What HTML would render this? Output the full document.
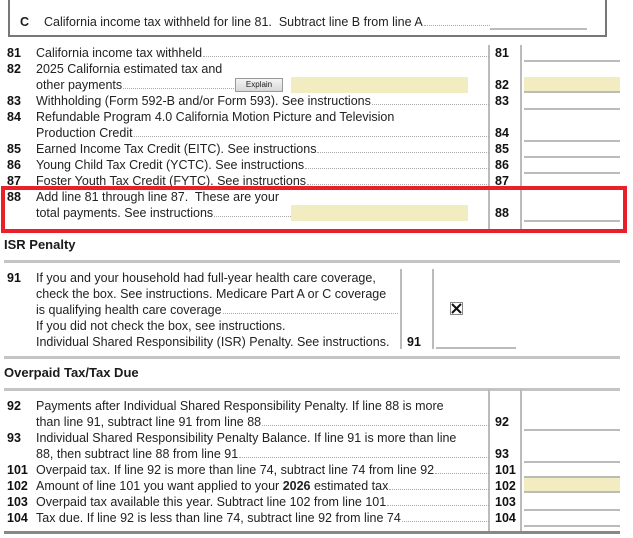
<!DOCTYPE html>
<html><head><meta charset="utf-8"><style>
*{margin:0;padding:0;box-sizing:border-box}
body{width:633px;height:538px;background:#fff;position:relative;overflow:hidden;font-family:"Liberation Sans",Arial,sans-serif;font-size:12.5px;color:#1a1a1a}
.a{position:absolute}
.n{position:absolute;left:7px;height:16px;line-height:16px;font-weight:bold;color:#111}
.t{position:absolute;left:36px;height:16px;line-height:16px;display:flex;white-space:nowrap;color:#222}
.t .d{flex:1;border-bottom:1px dotted #aaa;margin:0 0 4px 1px}
.rn{position:absolute;left:495px;height:16px;line-height:16px;font-weight:bold;color:#111}
.f{position:absolute;left:524px;width:96px;height:2px;background:#bbb}
.y{position:absolute;background:#f3ecc0}
.h{position:absolute;left:4px;font-weight:bold;font-size:13px}
.rule{position:absolute;left:4px;width:616px;height:3px;background:#c4c4c4}
.v{position:absolute;width:2px;background:#bbb}
</style></head><body>
<div class="a" style="left:8px;top:-2px;width:599px;height:39px;border:2px solid #777;border-top:none"></div>
<div class="a" style="left:20px;top:14px;line-height:16px;font-weight:bold">C</div>
<div class="t" style="left:44px;top:14px;width:446px">California income tax withheld for line 81.&nbsp; Subtract line B from line A<span class="d"></span></div>
<div class="a" style="left:490px;top:28px;width:97px;height:2px;background:#bbb"></div>

<div class="v" style="left:488px;top:45px;height:185px"></div>
<div class="v" style="left:520px;top:45px;height:185px"></div>

<div class="n" style="top:45px">81</div><div class="t" style="top:45px;width:453px">California income tax withheld<span class="d"></span></div><div class="rn" style="top:45px">81</div><div class="f" style="top:60px"></div>
<div class="n" style="top:61px">82</div><div class="t" style="top:61px">2025 California estimated tax and</div>
<div class="t" style="top:77px;width:198px">other payments<span class="d"></span></div>
<div class="a" style="left:235px;top:78px;width:48px;height:14px;border:1px solid #999;background:linear-gradient(#f4f4f4,#d8d8d8);font-size:8px;line-height:12px;text-align:center">Explain</div>
<div class="y" style="left:291px;top:77px;width:177px;height:16px"></div>
<div class="rn" style="top:77px">82</div><div class="y" style="left:524px;top:77px;width:96px;height:16px;border-bottom:2px solid #bbb"></div>
<div class="n" style="top:93px">83</div><div class="t" style="top:93px;width:453px">Withholding (Form 592-B and/or Form 593). See instructions<span class="d"></span></div><div class="rn" style="top:93px">83</div><div class="f" style="top:108px"></div>
<div class="n" style="top:109px">84</div><div class="t" style="top:109px">Refundable Program 4.0 California Motion Picture and Television</div>
<div class="t" style="top:125px;width:453px">Production Credit<span class="d"></span></div><div class="rn" style="top:125px">84</div><div class="f" style="top:140px"></div>
<div class="n" style="top:141px">85</div><div class="t" style="top:141px;width:453px">Earned Income Tax Credit (EITC). See instructions<span class="d"></span></div><div class="rn" style="top:141px">85</div><div class="f" style="top:156px"></div>
<div class="n" style="top:157px">86</div><div class="t" style="top:157px;width:453px">Young Child Tax Credit (YCTC). See instructions<span class="d"></span></div><div class="rn" style="top:157px">86</div><div class="f" style="top:172px"></div>
<div class="n" style="top:173px">87</div><div class="t" style="top:173px;width:453px">Foster Youth Tax Credit (FYTC). See instructions<span class="d"></span></div><div class="rn" style="top:173px">87</div>
<div class="n" style="top:189px">88</div><div class="t" style="top:189px">Add line 81 through line 87.&nbsp; These are your</div>
<div class="t" style="top:205px;width:255px">total payments. See instructions<span class="d"></span></div>
<div class="y" style="left:291px;top:205px;width:177px;height:16px"></div>
<div class="rn" style="top:205px">88</div><div class="f" style="top:220px"></div>
<div class="a" style="left:1px;top:186px;width:626px;height:47px;border:4px solid #e8202a"></div>

<div class="h" style="top:237px;line-height:16px">ISR Penalty</div>
<div class="rule" style="top:260px"></div>
<div class="v" style="left:400px;top:269px;height:80px"></div>
<div class="v" style="left:432px;top:269px;height:80px"></div>
<div class="n" style="top:270px">91</div><div class="t" style="top:270px">If you and your household had full-year health care coverage,</div>
<div class="t" style="top:286px">check the box. See instructions. Medicare Part A or C coverage</div>
<div class="t" style="top:302px;width:362px">is qualifying health care coverage<span class="d"></span></div>
<div class="t" style="top:318px">If you did not check the box, see instructions.</div>
<div class="t" style="top:334px">Individual Shared Responsibility (ISR) Penalty. See instructions.</div>
<div class="rn" style="left:407px;top:334px">91</div>
<div class="a" style="left:450px;top:302px;width:13px;height:13px;border:1px solid #888"><svg width="11" height="11" style="display:block"><path d="M1 1L10 10M10 1L1 10" stroke="#111" stroke-width="2"/></svg></div>
<div class="a" style="left:436px;top:347px;width:80px;height:2px;background:#bbb"></div>
<div class="rule" style="top:356px"></div>

<div class="h" style="top:365px;line-height:16px">Overpaid Tax/Tax Due</div>
<div class="rule" style="top:388px"></div>
<div class="v" style="left:488px;top:389px;height:144px"></div>
<div class="v" style="left:520px;top:389px;height:144px"></div>
<div class="n" style="top:398px">92</div><div class="t" style="top:398px">Payments after Individual Shared Responsibility Penalty. If line 88 is more</div>
<div class="t" style="top:414px;width:453px">than line 91, subtract line 91 from line 88<span class="d"></span></div><div class="rn" style="top:414px">92</div><div class="f" style="top:429px"></div>
<div class="n" style="top:430px">93</div><div class="t" style="top:430px">Individual Shared Responsibility Penalty Balance. If line 91 is more than line</div>
<div class="t" style="top:446px;width:453px">88, then subtract line 88 from line 91<span class="d"></span></div><div class="rn" style="top:446px">93</div><div class="f" style="top:461px"></div>
<div class="n" style="top:462px">101</div><div class="t" style="top:462px;width:453px">Overpaid tax. If line 92 is more than line 74, subtract line 74 from line 92<span class="d"></span></div><div class="rn" style="top:462px">101</div>
<div class="y" style="left:524px;top:476px;width:96px;height:17px;border-top:2px solid #bbb;border-bottom:2px solid #bbb"></div>
<div class="n" style="top:478px">102</div><div class="t" style="top:478px;width:453px">Amount of line 101 you want applied to your&nbsp;<b>2026</b>&nbsp;estimated tax<span class="d"></span></div><div class="rn" style="top:478px">102</div>
<div class="n" style="top:494px">103</div><div class="t" style="top:494px;width:453px">Overpaid tax available this year. Subtract line 102 from line 101<span class="d"></span></div><div class="rn" style="top:494px">103</div><div class="f" style="top:509px"></div>
<div class="n" style="top:510px">104</div><div class="t" style="top:510px;width:453px">Tax due. If line 92 is less than line 74, subtract line 92 from line 74<span class="d"></span></div><div class="rn" style="top:510px">104</div><div class="f" style="top:525px"></div>
<div class="a" style="left:4px;top:531px;width:616px;height:3px;background:#888"></div>
</body></html>
